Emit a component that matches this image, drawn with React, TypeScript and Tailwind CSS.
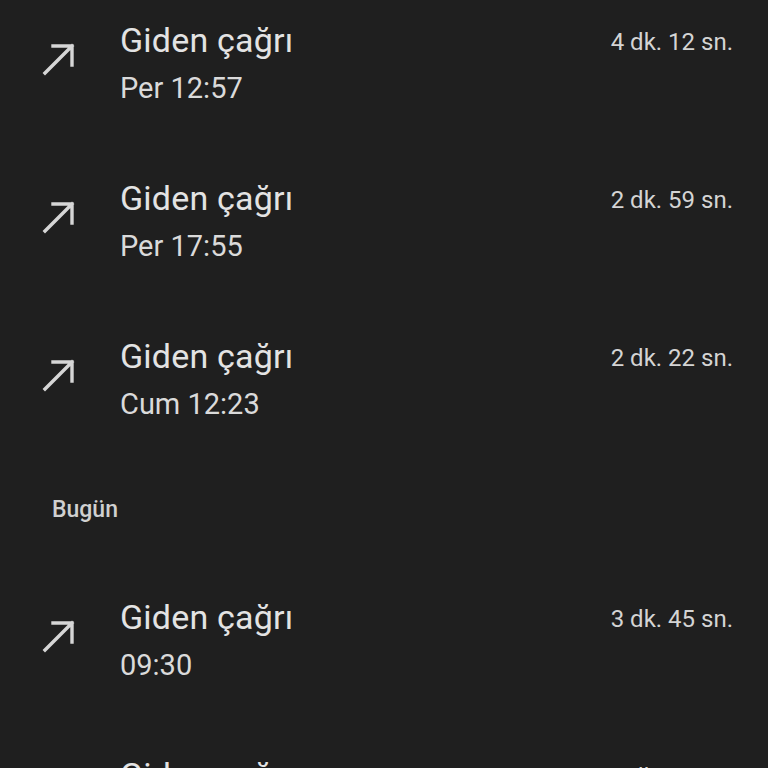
const calls = [
  { time: "Per 12:57", duration: "4 dk. 12 sn." },
  { time: "Per 17:55", duration: "2 dk. 59 sn." },
  { time: "Cum 12:23", duration: "2 dk. 22 sn." },
];

const today = [
  { time: "09:30", duration: "3 dk. 45 sn." },
  { time: "09:12", duration: "1 dk. 08 sn." },
];

function OutgoingArrow() {
  return (
    <svg width="34" height="34" viewBox="0 0 34 34" fill="none">
      <path
        d="M3 31L30 4M11 4H30V23"
        stroke="#d6d6d6"
        strokeWidth="3.4"
        strokeLinecap="square"
      />
    </svg>
  );
}

function CallRow({ time, duration }: { time: string; duration: string }) {
  return (
    <div className="flex h-[158px] shrink-0 pt-[20px]">
      <div className="w-[120px] shrink-0 pl-[42px] pt-[22px]">
        <OutgoingArrow />
      </div>
      <div className="flex flex-1 flex-col">
        <span className="text-[34px] leading-[40px] tracking-[0.2px] text-[#e3e3e3]">Giden çağrı</span>
        <span className="mt-[10px] text-[29px] leading-[36px] text-[#dadada]">{time}</span>
      </div>
      <span className="pr-[35px] pt-[6px] text-[24px] leading-[32px] text-[#d4d4d4]">
        {duration}
      </span>
    </div>
  );
}

export default function App() {
  return (
    <div
      className="flex h-[768px] w-[768px] flex-col overflow-hidden bg-[#1f1f1f]"
      style={{ fontFamily: "Roboto, 'Noto Sans', sans-serif" }}
    >
      {calls.map((c) => (
        <CallRow key={c.time} {...c} />
      ))}
      <div className="h-[103px] shrink-0 pl-[52px] pt-[22px] text-[23px] font-medium leading-[28px] text-[#d0d0d0]">
        Bugün
      </div>
      {today.map((c) => (
        <CallRow key={c.time} {...c} />
      ))}
    </div>
  );
}
